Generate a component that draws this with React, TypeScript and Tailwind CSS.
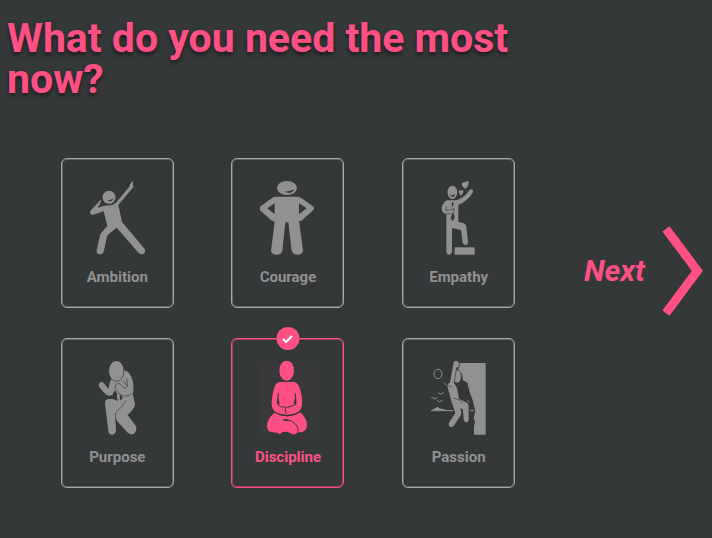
import { useState, type ReactNode } from "react";

type Option = { name: string; viewBox: string; art: ReactNode };

const CUT = "#353839";

const options: Option[] = [
  {
    name: "Ambition",
    viewBox: "105 93 165 222",
    art: (
      <>
        <circle cx="162" cy="142" r="19.5" fill="currentColor" />
        <path d="M158 150Q167 152 175 145Q173 154 165 154Q160 154 158 150Z" fill={CUT} />
        <path
          fill="currentColor"
          d="M233 93L235 96L233 103L236 107L232 115L190 165L201 216L269 297Q273 305 266 311Q258 316 251 309L185 233L157 256L146 305Q143 314 134 313Q124 311 125 302L135 256Q136 250 141 246L157 228L146 184L115 194Q106 196 105 188Q105 184 108 180L129 158L136 149L138 152L135 161L128 173L148 167L172 165L183 158L223 110L225 103Z"
        />
      </>
    ),
  },
  {
    name: "Courage",
    viewBox: "105 93 165 222",
    art: (
      <>
        <ellipse cx="186" cy="114" rx="30" ry="21" fill="currentColor" />
        <path d="M178 124Q194 126 207 118Q204 128 193 129Q184 129 178 124Z" fill={CUT} />
        <path
          fill="currentColor"
          fillRule="evenodd"
          d="M151 140H219L228 143L264 169Q270 174 265 180L232 210Q227 214 222 213L234 300Q234 312 221 314Q204 315 200 302L190 217H181L172 302Q169 314 154 314Q140 313 138 302L149 214Q142 215 137 209L105 181Q100 175 107 169L142 143ZM149 160L127 175L149 193ZM222 160V193L245 175Z"
        />
      </>
    ),
  },
  {
    name: "Empathy",
    viewBox: "105 93 165 222",
    art: (
      <>
        <ellipse cx="169" cy="127" rx="14.500" ry="20" fill="currentColor" />
        <path d="M162 135Q171 137 177 131Q176 141 169 141Q164 140 162 135Z" fill={CUT} />
        <path
          fill="currentColor"
          d="M199 98Q206 94 209 97Q215 90 218 96Q220 105 208 117Q196 108 197 101ZM189 122Q193 118 195 122Q201 118 203 124Q202 130 195 137Q187 131 189 122Z"
        />
        <path
          fill="currentColor"
          d="M154 151H180Q205 144 220 121Q225 115 230 119Q233 123 230 128Q214 154 187 164V216L202 219Q210 221 211 230L216 275Q216 285 208 285Q201 284 200 276L195 240L168 234V304Q167 314 159 314Q151 313 151 304V193L142 188Q133 177 140 164Q145 154 154 151Z"
        />
        <path
          d="M153 168Q147 174 150 181Q160 181 174 176M151 190Q166 195 174 185V174"
          stroke={CUT}
          strokeWidth="2"
          fill="none"
        />
        <path d="M167 159L171 157L174 160L171 166V170H168ZM168 192L174 190L176 203L170 214L164 204Z" fill={CUT} />
        <path d="M176 292H236V314H176Z" fill="currentColor" />
      </>
    ),
  },
  {
    name: "Purpose",
    viewBox: "105 123 165 222",
    art: (
      <>
        <path
          fill="currentColor"
          d="M208 151Q225 153 233 183Q238 205 233 222L240 252Q238 268 218 285L241 316Q248 328 239 340Q230 347 219 339L188 305Q179 294 184 278L180 281L183 331Q182 343 172 344Q161 343 160 332L150 251Q149 239 160 237H171Q181 237 187 244L185 220L179 211L174 223Q166 229 157 226Q149 222 133 201Q128 192 136 187Q142 184 147 190L160 207L164 189Q165 176 178 176Z"
        />
        <ellipse cx="184" cy="153" rx="23" ry="31" fill="currentColor" stroke={CUT} strokeWidth="2" />
        <path
          d="M205 182L216 197Q219 185 214 176M181 194Q176 204 189 218Q208 237 229 222M184 193Q190 186 197 194L208 205Q215 205 218 196M213 241Q202 262 183 277M171 230Q181 230 190 239"
          stroke={CUT}
          strokeWidth="2"
          fill="none"
        />
        <path d="M194 223L204 233L195 242ZM178 214L187 222L183 240L171 234Z" fill={CUT} />
      </>
    ),
  },
  {
    name: "Discipline",
    viewBox: "105 123 165 222",
    art: (
      <>
        <defs>
          <pattern id="lattice" width="14" height="18" patternUnits="userSpaceOnUse">
            <path d="M0 0L14 18M14 0L0 18" stroke="currentColor" strokeWidth="1.500" opacity=".09" />
          </pattern>
        </defs>
        <rect x="107" y="125" width="159" height="216" fill="url(#lattice)" />
        <ellipse cx="185" cy="152" rx="22" ry="30" fill="currentColor" />
        <path
          fill="currentColor"
          d="M164 186H207Q220 187 226 211Q234 239 230 260Q225 276 207 281Q184 288 160 280Q142 273 140 255Q139 232 148 203Q153 187 164 186Z"
        />
        <path
          fill="currentColor"
          d="M148 278Q165 287 186 289Q208 288 226 277Q246 295 246 315Q246 332 229 337H219L207 344L196 340L187 335L173 336L165 343L156 338L135 335Q125 331 126 314Q128 296 148 278Z"
        />
        <path
          d="M161 219Q157 236 157 252L169 261Q179 259 182 264Q186 260 195 260L213 253Q213 235 210 219M181 265Q179 274 184 281M147 276Q166 287 187 288Q208 286 228 274M174 299Q187 296 200 304Q222 316 219 335"
          stroke={CUT}
          strokeWidth="3"
          fill="none"
        />
        <path d="M158 222L164 251L157 253ZM212 222L206 251L213 253ZM172 301Q183 295 195 304L183 303Z" fill={CUT} />
      </>
    ),
  },
  {
    name: "Passion",
    viewBox: "105 93 165 222",
    art: (
      <>
        <path
          fill="currentColor"
          d="M184 99H269V314H234V290L237 276L233 264L238 243L231 214L220 183L214 158L201 151L198 132L189 125Z"
        />
        <ellipse cx="126" cy="132" rx="12" ry="14" stroke="currentColor" strokeWidth="3" fill="none" />
        <path
          d="M106 203L114 204L117 208L122 202M127 189L135 193L144 187M123 211L130 216L140 211M145 158L149 165M105 242H172M222 242H234M214 211L221 217"
          stroke="currentColor"
          strokeWidth="3"
          fill="none"
        />
        <path d="M107 241L117 235L124 230L131 235L144 238L158 242Z" fill="currentColor" />
        <ellipse cx="183" cy="139" rx="13" ry="20" fill="currentColor" stroke={CUT} strokeWidth="2" />
        <path
          fill="currentColor"
          d="M173 96Q180 90 188 96L190 111L182 113L174 159L183 174L189 207L213 218Q219 222 218 232V269Q216 278 209 277Q203 276 203 268L201 239L193 234L196 249Q196 256 190 262L175 285Q169 293 162 290Q155 286 160 277L178 249L166 213L154 168Q153 160 162 158Z"
        />
        <path
          d="M189 97L190 111L182 113L174 159M172 204L192 211L201 220M155 166L168 172"
          stroke={CUT}
          strokeWidth="2"
          fill="none"
        />
      </>
    ),
  },
];

function CheckBadge() {
  return (
    <span className="absolute -top-3 left-1/2 flex size-[23px] -translate-x-1/2 items-center justify-center rounded-full bg-[#ff5085] text-white">
      <svg viewBox="0 0 12 10" className="h-[10px] w-3" fill="none" aria-hidden="true">
        <path d="M1.500 5L4.500 8L10.500 2" stroke="currentColor" strokeWidth="2.200" />
      </svg>
    </span>
  );
}

export default function App() {
  const [selected, setSelected] = useState("Discipline");

  return (
    <main className="min-h-screen bg-[#353839] pt-[18px] font-[Roboto,sans-serif] text-[#919191]">
      <h1
        id="question"
        className="max-w-[576px] px-[7px] text-[41px] leading-[41px] font-bold text-[#ff5085] [text-shadow:0_3px_4px_rgba(0,0,0,0.5)]"
      >
        What do you need the most now?
      </h1>
      <form className="mt-[58px] flex items-center" onSubmit={(e) => e.preventDefault()}>
        <div
          role="radiogroup"
          aria-labelledby="question"
          className="grid grow grid-cols-3 justify-items-center gap-y-[30px] px-8"
        >
          {options.map(({ name, viewBox, art }) => {
            const active = name === selected;
            return (
              <label
                key={name}
                className={`relative flex h-[150px] w-[113px] cursor-pointer flex-col items-center rounded-md border pt-[22px] ${
                  active
                    ? "border-[#ff5085] text-[#ff5085] shadow-[inset_0_0_0_1px_#8f4560]"
                    : "border-[#a9a9a9] shadow-[inset_0_0_0_1px_#626465]"
                }`}
              >
                <input
                  type="radio"
                  name="need"
                  value={name}
                  checked={active}
                  onChange={() => setSelected(name)}
                  className="sr-only"
                />
                {active && <CheckBadge />}
                <svg viewBox={viewBox} className="h-[74px] w-[55px]" aria-hidden="true">
                  {art}
                </svg>
                <span className="mt-3 text-[15px] leading-5 font-bold">{name}</span>
              </label>
            );
          })}
        </div>
        <button
          type="submit"
          className="mb-[105px] flex w-[136px] shrink-0 cursor-pointer items-center justify-between pr-[9px] pl-2 text-[30px] leading-9 font-bold text-[#ff5085] italic"
        >
          Next
          <svg
            viewBox="270 30 124 271"
            className="h-[90px] w-[41px] overflow-visible"
            fill="none"
            aria-hidden="true"
          >
            <path d="M282 38L377 165L282 293" stroke="currentColor" strokeWidth="27" />
          </svg>
        </button>
      </form>
    </main>
  );
}
